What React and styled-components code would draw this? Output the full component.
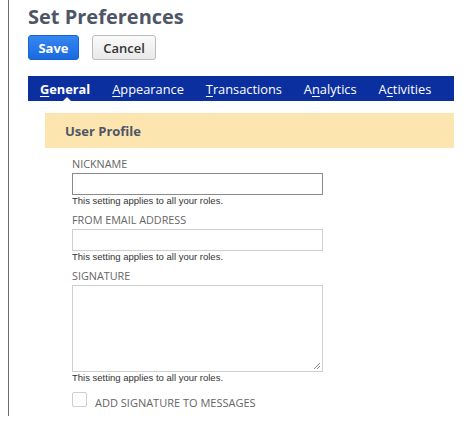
import React from 'react'
import styled, { createGlobalStyle } from 'styled-components'

const GlobalStyle = createGlobalStyle`
  html, body {
    margin: 0;
    padding: 0;
    background: #fff;
    font-family: 'Open Sans', 'Noto Sans', sans-serif;
  }
`

const Frame = styled.div`
  margin-left: 8px;
  height: 416px;
  border-left: 1px solid #6b6b6b;
  padding-left: 19px;
  box-sizing: border-box;
`

const Title = styled.h1`
  margin: 0;
  padding-top: 3px;
  font-size: 20px;
  line-height: 27px;
  font-weight: 700;
  color: #4d5566;
`

const ButtonRow = styled.div`
  display: flex;
  gap: 13px;
  margin-top: 5px;
`

const Button = styled.button`
  height: 25px;
  width: ${(p) => p.$width}px;
  padding: 0;
  border-radius: 3px;
  font-family: 'Open Sans', sans-serif;
  font-size: 13px;
  font-weight: ${(p) => (p.$primary ? 700 : 600)};
  color: ${(p) => (p.$primary ? '#fff' : '#333')};
  border: 1px solid ${(p) => (p.$primary ? '#1c62d0' : '#bdbdbd')};
  background: ${(p) =>
    p.$primary
      ? 'linear-gradient(#3587f0, #1a6ae0)'
      : 'linear-gradient(#fafafa, #e9e9e9)'};
`

const Nav = styled.div`
  display: flex;
  width: 426px;
  height: 25px;
  margin-top: 16px;
  padding-left: 1px;
  background: #0c2f9f;
  box-sizing: border-box;
`

const Tab = styled.div`
  position: relative;
  display: flex;
  align-items: center;
  padding: 0 11px;
  font-size: 12.8px;
  color: #fff;
  font-weight: ${(p) => (p.$active ? 700 : 400)};
  u {
    text-decoration: underline;
    text-underline-offset: 2px;
  }
  ${(p) =>
    p.$active &&
    `
    &:after {
      content: '';
      position: absolute;
      left: 50%;
      bottom: 0;
      margin-left: -2px;
      border-left: 4px solid transparent;
      border-right: 4px solid transparent;
      border-bottom: 4px solid #fff;
    }
  `}
`

const Section = styled.div`
  margin-left: 17px;
  margin-top: 12px;
  width: 409px;
`

const Band = styled.div`
  height: 35px;
  display: flex;
  align-items: center;
  padding-left: 20px;
  background: #fde5b0;
  font-size: 13px;
  font-weight: 700;
  color: #4d5566;
`

const Form = styled.div`
  padding-left: 27px;
  padding-top: 9px;
  width: 251px;
`

const Field = styled.div`
  margin-bottom: 7px;
`

const Label = styled.div`
  font-size: 10.8px;
  line-height: 14px;
  color: #666;
  text-transform: uppercase;
  margin-bottom: 2px;
`

const Input = styled.div`
  height: 22px;
  box-sizing: border-box;
  border: 1px solid ${(p) => (p.$dark ? '#8a8a8a' : '#cfcfcf')};
  background: #fff;
`

const TextArea = styled.div`
  position: relative;
  height: 87px;
  box-sizing: border-box;
  border: 1px solid #cfcfcf;
`

const Grip = styled.svg`
  position: absolute;
  right: 1px;
  bottom: 1px;
`

const Help = styled.div`
  font-family: 'Liberation Sans', Arial, sans-serif;
  font-size: 9.5px;
  line-height: 10px;
  color: #333;
  margin-top: 1px;
`

const CheckRow = styled.div`
  display: flex;
  align-items: center;
  gap: 8px;
  margin-top: -1px;
`

const Box = styled.div`
  width: 15px;
  height: 15px;
  box-sizing: border-box;
  border: 1px solid #cfcfcf;
  border-radius: 2px;
`

const CheckLabel = styled.div`
  font-size: 11px;
  color: #666;
  padding-top: 6px;
`

const tabs = [
  ['G', 'eneral', true],
  ['A', 'ppearance'],
  ['T', 'ransactions'],
]

export default function App() {
  return (
    <>
      <GlobalStyle />
      <Frame>
        <Title>Set Preferences</Title>
        <ButtonRow>
          <Button $primary $width={51}>Save</Button>
          <Button $width={64}>Cancel</Button>
        </ButtonRow>
        <Nav>
          {tabs.map(([k, rest, active]) => (
            <Tab key={k} $active={active}>
              <span><u>{k}</u>{rest}</span>
            </Tab>
          ))}
          <Tab><span>A<u>n</u>alytics</span></Tab>
          <Tab><span>A<u>c</u>tivities</span></Tab>
        </Nav>
        <Section>
          <Band>User Profile</Band>
          <Form>
            <Field>
              <Label>Nickname</Label>
              <Input $dark />
              <Help>This setting applies to all your roles.</Help>
            </Field>
            <Field>
              <Label>From Email Address</Label>
              <Input />
              <Help>This setting applies to all your roles.</Help>
            </Field>
            <Field>
              <Label>Signature</Label>
              <TextArea>
                <Grip width="8" height="8" viewBox="0 0 8 8">
                  <path d="M7 1 L1 7 M7 4 L4 7" stroke="#888" strokeWidth="1" />
                </Grip>
              </TextArea>
              <Help>This setting applies to all your roles.</Help>
            </Field>
            <CheckRow>
              <Box />
              <CheckLabel>ADD SIGNATURE TO MESSAGES</CheckLabel>
            </CheckRow>
          </Form>
        </Section>
      </Frame>
    </>
  )
}
